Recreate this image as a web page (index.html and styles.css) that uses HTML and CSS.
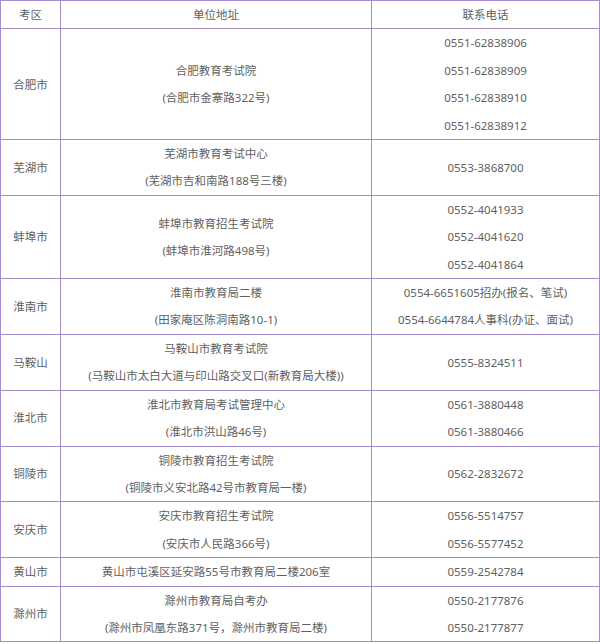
FILE: index.html
```html
<!DOCTYPE html>
<html lang="zh-CN">
<head>
<meta charset="utf-8">
<title>考区联系方式</title>
<link rel="stylesheet" href="styles.css">
</head>
<body>
<table class="contacts">
  <colgroup><col class="c1"><col class="c2"><col class="c3"></colgroup>
  <thead>
    <tr><th>考区</th><th>单位地址</th><th>联系电话</th></tr>
  </thead>
  <tbody>
    <tr>
      <td>合肥市</td>
      <td><p>合肥教育考试院</p><p>(合肥市金寨路322号)</p></td>
      <td><p>0551-62838906</p><p>0551-62838909</p><p>0551-62838910</p><p>0551-62838912</p></td>
    </tr>
    <tr>
      <td>芜湖市</td>
      <td><p>芜湖市教育考试中心</p><p>(芜湖市吉和南路188号三楼)</p></td>
      <td><p>0553-3868700</p></td>
    </tr>
    <tr>
      <td>蚌埠市</td>
      <td><p>蚌埠市教育招生考试院</p><p>(蚌埠市淮河路498号)</p></td>
      <td><p>0552-4041933</p><p>0552-4041620</p><p>0552-4041864</p></td>
    </tr>
    <tr>
      <td>淮南市</td>
      <td><p>淮南市教育局二楼</p><p>(田家庵区陈洞南路10-1)</p></td>
      <td><p>0554-6651605招办(报名、笔试)</p><p>0554-6644784人事科(办证、面试)</p></td>
    </tr>
    <tr>
      <td>马鞍山</td>
      <td><p>马鞍山市教育考试院</p><p>(马鞍山市太白大道与印山路交叉口(新教育局大楼))</p></td>
      <td><p>0555-8324511</p></td>
    </tr>
    <tr>
      <td>淮北市</td>
      <td><p>淮北市教育局考试管理中心</p><p>(淮北市洪山路46号)</p></td>
      <td><p>0561-3880448</p><p>0561-3880466</p></td>
    </tr>
    <tr>
      <td>铜陵市</td>
      <td><p>铜陵市教育招生考试院</p><p>(铜陵市义安北路42号市教育局一楼)</p></td>
      <td><p>0562-2832672</p></td>
    </tr>
    <tr>
      <td>安庆市</td>
      <td><p>安庆市教育招生考试院</p><p>(安庆市人民路366号)</p></td>
      <td><p>0556-5514757</p><p>0556-5577452</p></td>
    </tr>
    <tr>
      <td>黄山市</td>
      <td><p>黄山市屯溪区延安路55号市教育局二楼206室</p></td>
      <td><p>0559-2542784</p></td>
    </tr>
    <tr>
      <td>滁州市</td>
      <td><p>滁州市教育局自考办</p><p>(滁州市凤凰东路371号，滁州市教育局二楼)</p></td>
      <td><p>0550-2177876</p><p>0550-2177877</p></td>
    </tr>
  </tbody>
</table>
</body>
</html>
```

FILE: styles.css
```css
html, body {
  margin: 0;
  padding: 0;
  background: #ffffff;
}

.contacts {
  width: 599px;
  border-collapse: collapse;
  table-layout: fixed;
  font-family: "Noto Sans", "Noto Sans CJK SC", sans-serif;
  font-size: 11.5px;
  color: #5f5f5f;
}

.c1 { width: 60px; }
.c2 { width: 311px; }
.c3 { width: 228px; }

.contacts th,
.contacts td {
  border: 1px solid #a58bd0;
  padding: 0;
  text-align: center;
  vertical-align: middle;
  font-weight: normal;
  line-height: 27.4px;
  white-space: nowrap;
}

.contacts p {
  margin: 0;
  line-height: 27.4px;
}
```
